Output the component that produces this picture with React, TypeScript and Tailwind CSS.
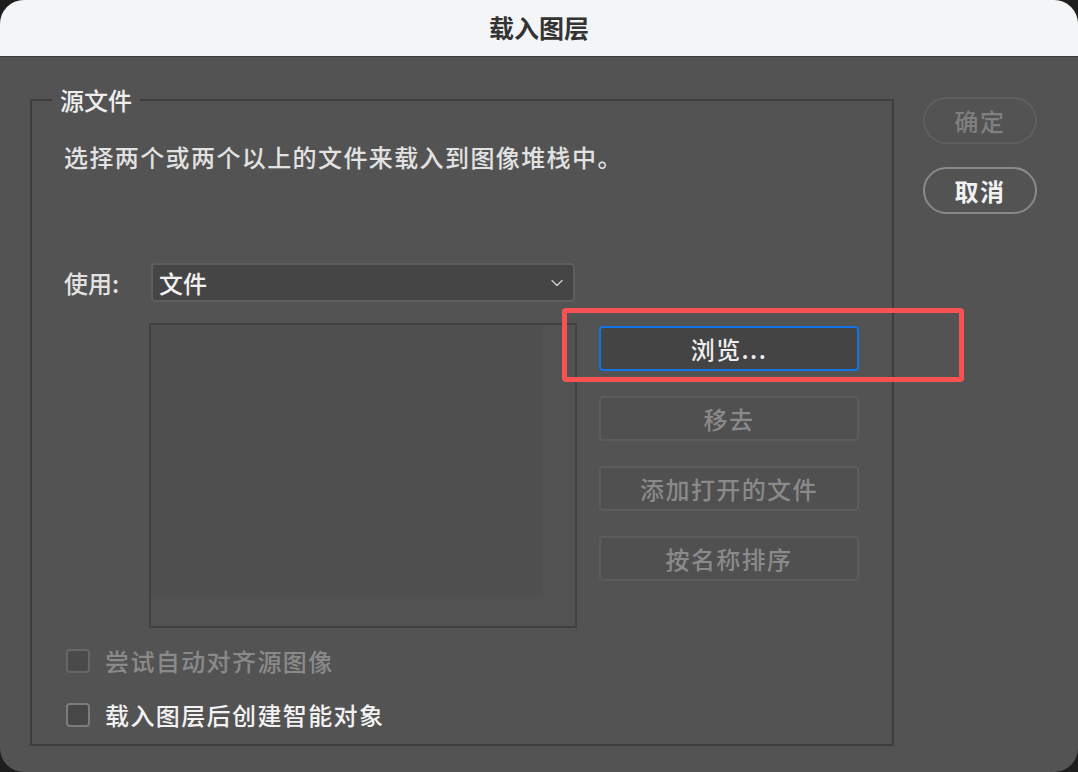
import { ChevronDown } from 'lucide-react';

const FONT = { fontFamily: '"Noto Sans CJK SC", "Noto Sans", sans-serif' };

function SideButton({ label, active }: { label: string; active?: boolean }) {
  return (
    <button
      className={
        active
          ? 'h-[45px] w-[260px] rounded-[4px] border-2 border-[#1473e6] bg-[#444444] text-[24px] font-medium tracking-[1.4px] text-[#eeeeee]'
          : 'h-[45px] w-[260px] rounded-[4px] border-2 border-[#5c5c5c] bg-[#505050] text-[24px] font-medium tracking-[1.4px] text-[#8a8a8a]'
      }
    >
      {label}
    </button>
  );
}

function Check({ label, disabled }: { label: string; disabled?: boolean }) {
  return (
    <label className="flex h-[32px] items-center gap-[15px]">
      <span
        className={
          disabled
            ? 'h-[24px] w-[24px] rounded-[4px] border-2 border-[#666666] bg-[#4a4a4a]'
            : 'h-[24px] w-[24px] rounded-[4px] border-2 border-[#7c7c7c] bg-[#474747]'
        }
      />
      <span
        className={
          disabled
            ? 'text-[24px] font-medium tracking-[1.4px] text-[#8a8a8a]'
            : 'text-[24px] font-medium tracking-[1.4px] text-[#f2f2f2]'
        }
      >
        {label}
      </span>
    </label>
  );
}

export default function App() {
  return (
    <div className="relative h-[772px] w-[1078px] overflow-hidden bg-[#1e1e1e]" style={FONT}>
      <div className="flex h-full w-full flex-col overflow-hidden rounded-[24px] bg-[#535353]">
        <div className="flex h-[57px] shrink-0 items-center justify-center border-b border-[#3a3a3a] bg-[#f4f5f7]">
          <span className="text-[25px] font-bold text-[#333333]">载入图层</span>
        </div>

        <div className="flex pl-[30px] pt-[29px]">
          <fieldset className="w-[864px] border-2 border-[#3e3e3e] pb-[13px] pl-[32px]">
            <legend className="ml-[-12px] px-[8px] text-[24px] font-medium leading-[28px] text-[#eeeeee]">
              源文件
            </legend>

            <p className="mt-[27px] text-[24px] font-medium leading-[32px] tracking-[1.4px] text-[#e2e2e2]">
              选择两个或两个以上的文件来载入到图像堆栈中。
            </p>

            <div className="mt-[90px] flex items-center">
              <span className="w-[87px] text-[24px] font-medium text-[#e2e2e2]">使用:</span>
              <div className="flex h-[39px] w-[424px] items-center justify-between rounded-[4px] border-2 border-[#5e5e5e] bg-[#454545] pl-[6px] pr-[6px]">
                <span className="text-[24px] font-medium text-[#f2f2f2]">文件</span>
                <ChevronDown size={20} strokeWidth={1.5} className="text-[#d0d0d0]" />
              </div>
            </div>

            <div className="mt-[21px] flex gap-[22px]">
              <div className="ml-[85px] flex h-[305px] w-[428px] border-2 border-[#414141] bg-[#525252]">
                <div className="h-[271px] w-[392px] bg-[#4f4f4f]" />
              </div>
              <div className="mt-[3px] flex flex-col gap-[25px]">
                <SideButton label="浏览..." active />
                <SideButton label="移去" />
                <SideButton label="添加打开的文件" />
                <SideButton label="按名称排序" />
              </div>
            </div>

            <div className="mt-[17px] flex flex-col gap-[22px] pl-[2px]">
              <Check label="尝试自动对齐源图像" disabled />
              <Check label="载入图层后创建智能对象" />
            </div>
          </fieldset>

          <div className="ml-[29px] mt-[11px] flex flex-col gap-[23px]">
            <button className="h-[47px] w-[114px] rounded-full border-2 border-[#5f5f5f] text-[24px] font-medium tracking-[1.4px] text-[#808080]">
              确定
            </button>
            <button className="h-[47px] w-[114px] rounded-full border-2 border-[#8a8a8a] text-[24px] font-bold tracking-[1.4px] text-[#f2f2f2]">
              取消
            </button>
          </div>
        </div>
      </div>

      <div className="absolute left-[562px] top-[308px] h-[74px] w-[402px] rounded-[4px] border-[5px] border-[#fa5252]" />
    </div>
  );
}
